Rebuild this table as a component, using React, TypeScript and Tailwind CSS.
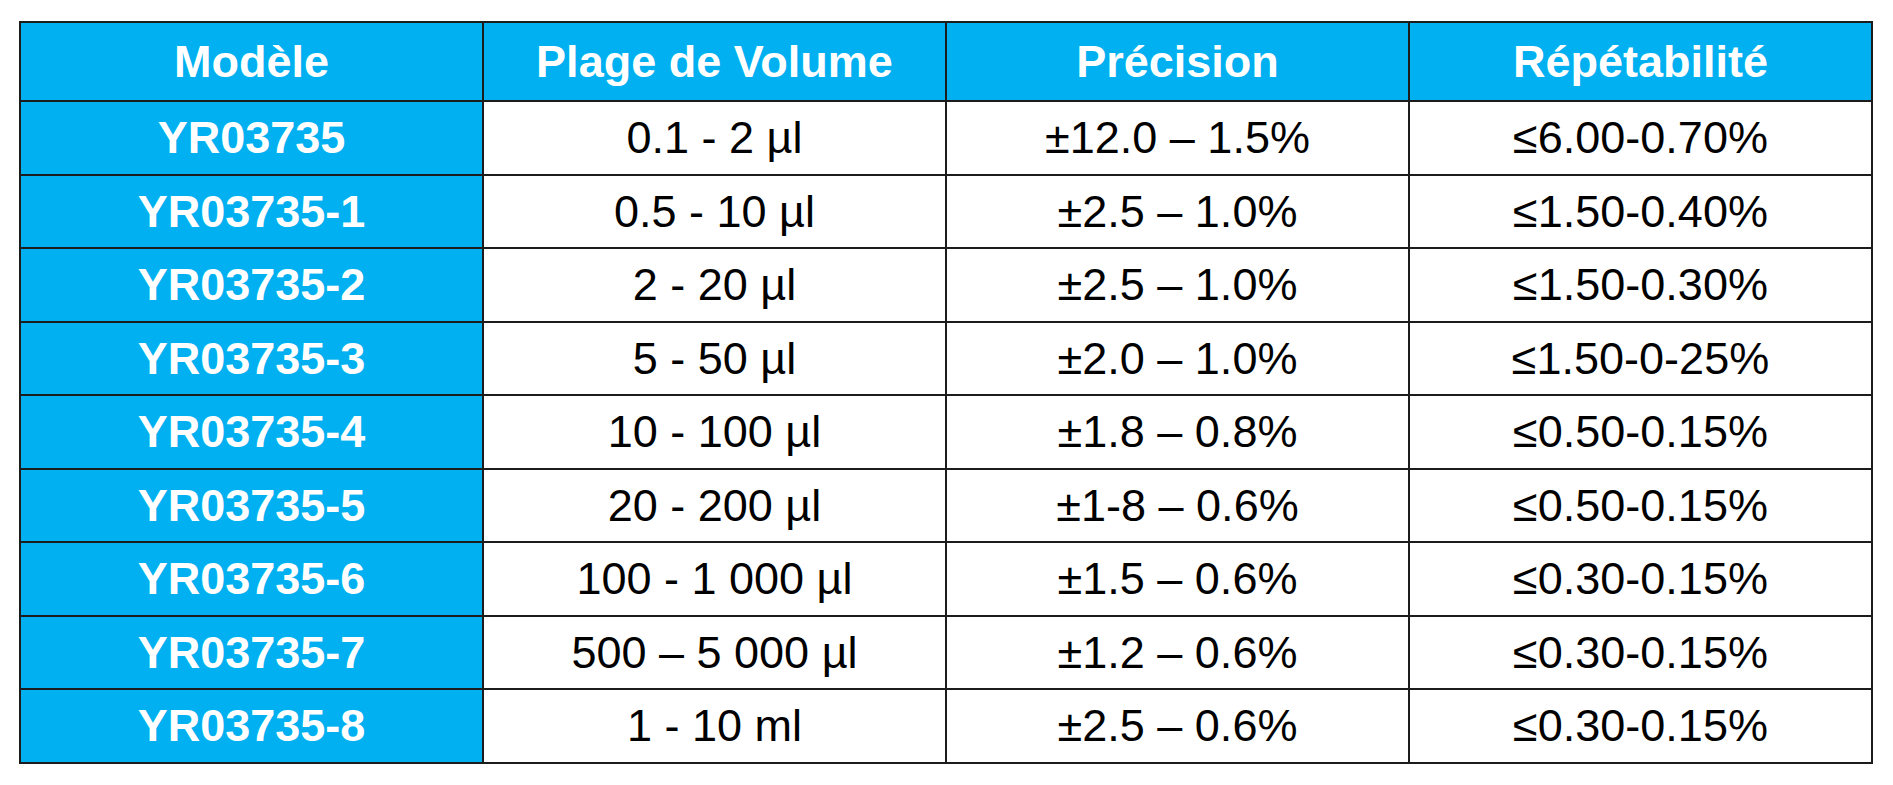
import React from 'react';

type Row = { model: string; range: string; precision: string; repeat: string };

const ROWS: Row[] = [
    { model: 'YR03735', range: '0.1 - 2 µl', precision: '±12.0 – 1.5%', repeat: '≤6.00-0.70%' },
    { model: 'YR03735-1', range: '0.5 - 10 µl', precision: '±2.5 – 1.0%', repeat: '≤1.50-0.40%' },
    { model: 'YR03735-2', range: '2 - 20 µl', precision: '±2.5 – 1.0%', repeat: '≤1.50-0.30%' },
    { model: 'YR03735-3', range: '5 - 50 µl', precision: '±2.0 – 1.0%', repeat: '≤1.50-0-25%' },
    { model: 'YR03735-4', range: '10 - 100 µl', precision: '±1.8 – 0.8%', repeat: '≤0.50-0.15%' },
    { model: 'YR03735-5', range: '20 - 200 µl', precision: '±1-8 – 0.6%', repeat: '≤0.50-0.15%' },
    { model: 'YR03735-6', range: '100 - 1 000 µl', precision: '±1.5 – 0.6%', repeat: '≤0.30-0.15%' },
    { model: 'YR03735-7', range: '500 – 5 000 µl', precision: '±1.2 – 0.6%', repeat: '≤0.30-0.15%' },
    { model: 'YR03735-8', range: '1 - 10 ml', precision: '±2.5 – 0.6%', repeat: '≤0.30-0.15%' },
];

const HEADERS = ['Modèle', 'Plage de Volume', 'Précision', 'Répétabilité'];

export default function App() {
    return (
        <div className="min-h-screen bg-white pt-[21px] pl-[19px] font-['Liberation_Sans',Arial,sans-serif]">
            <table className="w-[1854px] border-collapse table-fixed border-2 border-[#1c1c1c] text-[45px] leading-none">
                <thead>
                    <tr className="h-[79px] bg-[#00b0f0]">
                        {HEADERS.map(h => (
                            <th key={h} className="border-2 border-[#1c1c1c] text-center font-bold text-white">
                                {h}
                            </th>
                        ))}
                    </tr>
                </thead>
                <tbody>
                    {ROWS.map(r => (
                        <tr key={r.model} className="h-[73.5px]">
                            {/* first column keeps the header blue */}
                            <td className="border-2 border-[#1c1c1c] bg-[#00b0f0] text-center font-bold text-white">{r.model}</td>
                            <td className="border-2 border-[#1c1c1c] text-center text-black">{r.range}</td>
                            <td className="border-2 border-[#1c1c1c] text-center text-black">{r.precision}</td>
                            <td className="border-2 border-[#1c1c1c] text-center text-black">{r.repeat}</td>
                        </tr>
                    ))}
                </tbody>
            </table>
        </div>
    );
}
